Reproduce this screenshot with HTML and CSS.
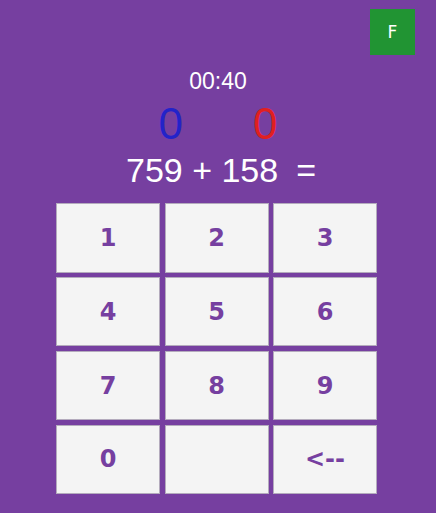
FILE: index.html
```html
<!DOCTYPE html>
<html>
<head>
<meta charset="utf-8">
<link rel="stylesheet" href="styles.css">
</head>
<body>
<div class="app">
  <div class="header">
    <button class="f-btn">F</button>
  </div>
  <div class="timer">00:40</div>
  <div class="scores">
    <span class="score blue">0</span>
    <span class="score red">0</span>
  </div>
  <div class="equation"><span>759 + 158</span><span class="eq">=</span></div>
  <div class="keypad">
    <button class="key">1</button>
    <button class="key">2</button>
    <button class="key">3</button>
    <button class="key">4</button>
    <button class="key">5</button>
    <button class="key">6</button>
    <button class="key">7</button>
    <button class="key">8</button>
    <button class="key">9</button>
    <button class="key">0</button>
    <button class="key"></button>
    <button class="key">&lt;--</button>
  </div>
</div>
</body>
</html>
```
FILE: styles.css
```css
html, body {
  margin: 0;
  padding: 0;
  background: #763fa0;
  font-family: "Liberation Sans", Arial, sans-serif;
  height: 100%;
}
.app {
  display: flex;
  flex-direction: column;
  align-items: center;
}
.header {
  align-self: stretch;
  display: flex;
  justify-content: flex-end;
  padding: 9px 21px 0 0;
}
.f-btn {
  width: 45px;
  height: 46px;
  background: #219433;
  border: none;
  color: #ffffff;
  font-family: "DejaVu Sans", sans-serif;
  font-size: 17px;
  padding: 0;
}
.timer {
  margin-top: 13px;
  font-size: 23px;
  line-height: 26px;
  color: #ffffff;
}
.scores {
  margin-top: 5px;
  display: flex;
  gap: 70px;
  font-size: 44px;
  line-height: 50px;
}
.blue { color: #2323c9; }
.red { color: #e02020; }
.equation {
  margin-top: 1px;
  font-size: 34px;
  line-height: 40px;
  color: #ffffff;
  display: flex;
  gap: 18px;
  padding-left: 6px;
}
.keypad {
  margin-top: 13px;
  display: grid;
  grid-template-columns: repeat(3, 104px);
  grid-auto-rows: 69.5px;
  column-gap: 4.5px;
  row-gap: 4.4px;
  margin-left: -3px;
}
.key {
  background: #f4f4f4;
  border: 1px solid #b4abbd;
  color: #763fa0;
  font-family: "DejaVu Sans", sans-serif;
  font-weight: bold;
  font-size: 24px;
  padding: 0;
}
```
